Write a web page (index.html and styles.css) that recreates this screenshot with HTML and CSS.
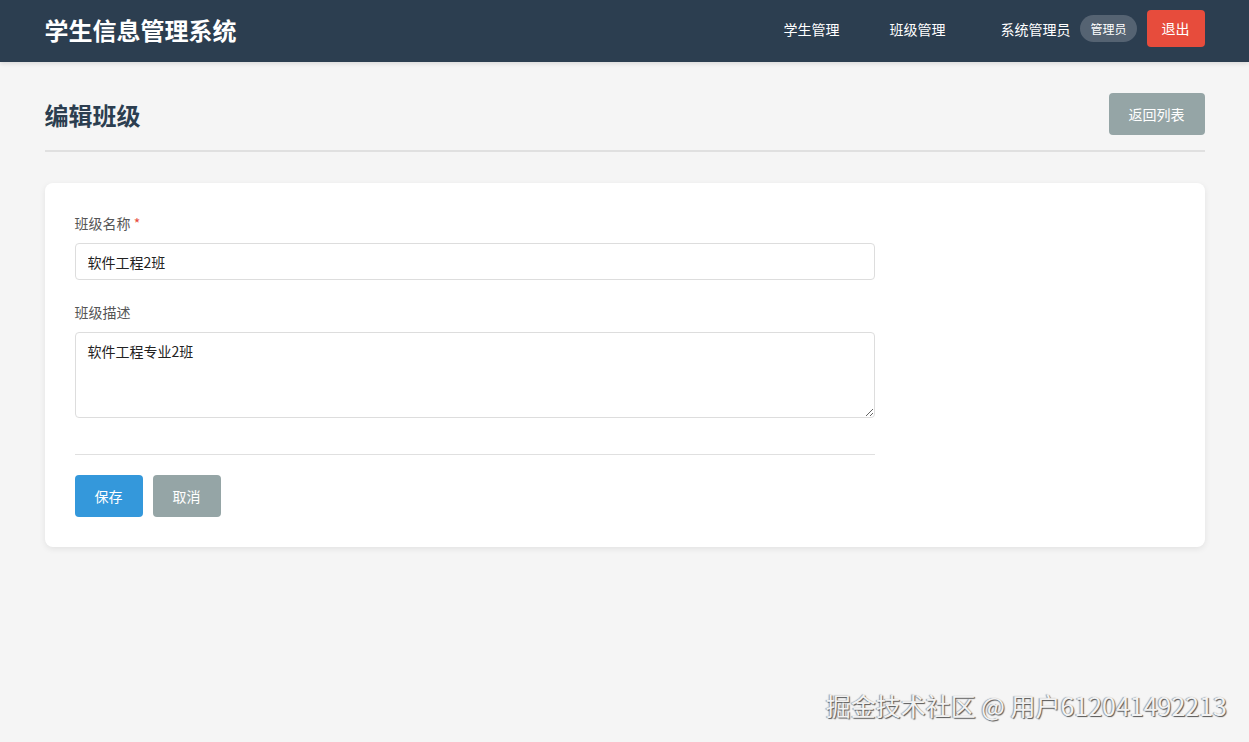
FILE: index.html
```html
<!DOCTYPE html>
<html lang="zh-CN">
<head>
<meta charset="utf-8">
<title>编辑班级 - 学生信息管理系统</title>
<link rel="stylesheet" href="styles.css">
</head>
<body>
<header class="topbar">
  <div class="topbar-inner">
    <div class="brand">学生信息管理系统</div>
    <nav class="nav">
      <a class="nav-link" href="#">学生管理</a>
      <a class="nav-link" href="#">班级管理</a>
      <div class="user">
        <span class="user-name">系统管理员</span>
        <span class="role-badge">管理员</span>
        <a class="btn btn-danger btn-sm" href="#">退出</a>
      </div>
    </nav>
  </div>
</header>
<main class="container">
  <div class="page-header">
    <h1 class="page-title">编辑班级</h1>
    <a class="btn btn-secondary" href="#">返回列表</a>
  </div>
  <section class="card">
    <form class="form">
      <div class="form-group">
        <label class="form-label">班级名称 <span class="required">*</span></label>
        <input class="form-control" type="text" value="软件工程2班">
      </div>
      <div class="form-group">
        <label class="form-label">班级描述</label>
        <textarea class="form-control textarea">软件工程专业2班</textarea>
      </div>
      <div class="form-actions">
        <button class="btn btn-primary" type="button">保存</button>
        <button class="btn btn-secondary" type="button">取消</button>
      </div>
    </form>
  </section>
</main>
<div class="watermark">掘金技术社区 @ 用户612041492213</div>
</body>
</html>
```
FILE: styles.css
```css
* { box-sizing: border-box; }
html, body { margin: 0; padding: 0; }
body {
  background: #f5f5f5;
  font-family: "Noto Sans CJK SC", "Noto Sans", "Liberation Sans", sans-serif;
  color: #333;
  font-size: 14px;
  min-height: 742px;
}
a { text-decoration: none; }

.topbar {
  background: #2c3e50;
  color: #fff;
  height: 62px;
  box-shadow: 0 2px 4px rgba(0,0,0,0.1);
}
.topbar-inner {
  max-width: 1200px;
  margin: 0 auto;
  padding: 0 20px 5px;
  height: 100%;
  display: flex;
  align-items: center;
  justify-content: space-between;
}
.brand {
  font-size: 24px;
  font-weight: 700;
  line-height: 1;
  margin-top: 3px;
}
.nav {
  display: flex;
  align-items: center;
}
.nav-link {
  color: #fff;
  font-size: 14px;
  margin-right: 50px;
}
.nav-link + .nav-link { margin-right: 55px; }
.user {
  display: flex;
  align-items: center;
  gap: 10px;
}
.user-name { font-size: 14px; color: #fff; }
.role-badge {
  background: #556372;
  color: #fff;
  font-size: 12px;
  line-height: 19px;
  padding: 4px 10px;
  border-radius: 14px;
}

.btn {
  display: inline-block;
  border: none;
  border-radius: 4px;
  color: #fff;
  font-family: inherit;
  font-size: 14px;
  line-height: 22px;
  padding: 10px 20px;
  cursor: pointer;
}
.btn-sm { padding: 7px 15px 8px; line-height: 22px; }
.btn-danger { background: #e74c3c; }
.btn-secondary { background: #95a5a6; }
.btn-primary { background: #3498db; }

.container {
  max-width: 1200px;
  margin: 0 auto;
  padding: 30px 20px;
}
.page-header {
  display: flex;
  align-items: center;
  justify-content: space-between;
  padding: 1px 0 15px;
  border-bottom: 2px solid #e0e0e0;
  margin-bottom: 31px;
}
.page-title {
  margin: 0;
  font-size: 24px;
  font-weight: 700;
  color: #2c3e50;
  line-height: 1;
  margin-top: 1px;
}

.card {
  background: #fff;
  border-radius: 8px;
  box-shadow: 0 2px 6px rgba(0,0,0,0.08);
  padding: 30px;
}
.form { max-width: 800px; }
.form-group { margin-bottom: 22px; }
.form-label {
  display: block;
  font-size: 14px;
  color: #555;
  line-height: 21px;
  margin-bottom: 9px;
}
.required { color: #e74c3c; }
.form-control {
  display: block;
  width: 100%;
  height: 37px;
  border: 1px solid #ddd;
  border-radius: 4px;
  padding: 8px 12px;
  font-family: inherit;
  font-size: 14px;
  color: #222;
  background: #fff;
}
.textarea {
  height: 86px;
  resize: vertical;
  line-height: 20px;
}
.form-actions {
  margin-top: 36px;
  padding-top: 20px;
  border-top: 1px solid #e0e0e0;
  display: flex;
  gap: 10px;
}

.watermark {
  position: absolute;
  right: 22px;
  top: 687px;
  font-size: 25px;
  line-height: 36px;
  color: #f2f2f2;
  text-shadow: 1px 1px 1px #555, -1px 0 1px #999;
  white-space: nowrap;
}
```
